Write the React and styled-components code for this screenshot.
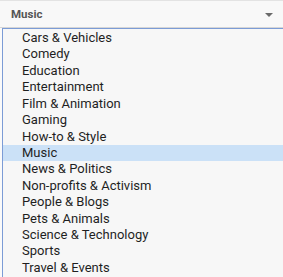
import { createGlobalStyle, styled } from "styled-components";

const categories = [
    "Cars & Vehicles",
    "Comedy",
    "Education",
    "Entertainment",
    "Film & Animation",
    "Gaming",
    "How-to & Style",
    "Music",
    "News & Politics",
    "Non-profits & Activism",
    "People & Blogs",
    "Pets & Animals",
    "Science & Technology",
    "Sports",
    "Travel & Events",
];

const selected = "Music";

function App() {
    return (
        <>
            <GlobalStyle />
            <Wrapper>
                <SelectBox>
                    <span>{selected}</span>
                    <Arrow />
                </SelectBox>
                <List>
                    {categories.map(c => (
                        <Option key={c} $active={c === selected}>{c}</Option>
                    ))}
                </List>
            </Wrapper>
        </>
    );
}

const GlobalStyle = createGlobalStyle`
    html, body {
        margin: 0;
        padding: 0;
        background: #fafafa;
    }
    body {
        font-family: Roboto, "Liberation Sans", Arial, sans-serif;
    }
`;

const Wrapper = styled.div`
    width: 283px;
    height: 277px;
    overflow: hidden;
    background: #fafafa;
`;

const SelectBox = styled.div`
    height: 26px;
    border-top: 1px solid #e3e3e3;
    border-bottom: 1px solid #d6d6d6;
    background: #f8f8f8;
    display: flex;
    align-items: center;
    justify-content: space-between;
    padding: 0 10px 0 11px;

    span{
        font-size: 11.5px;
        font-weight: 700;
        color: #555;
    }
`;

const Arrow = styled.div`
    width: 0;
    height: 0;
    border-left: 4px solid transparent;
    border-right: 4px solid transparent;
    border-top: 4px solid #6a6a6a;
    margin-top: 1px;
`;

const List = styled.ul`
    list-style: none;
    margin: 0 0 0 2px;
    padding: 1px 0 1px;
    border-top: 1px solid #7c9cd6;
    border-left: 1px solid #7c9cd6;
    border-bottom: 1px solid #7c9cd6;
    background: #f7f7f7;
`;

const Option = styled.li`
    height: 16.43px;
    line-height: 16.43px;
    padding-left: 19px;
    font-size: 13px;
    color: #1f1f1f;
    white-space: nowrap;
    background: ${p => (p.$active ? "#cbe1f7" : "transparent")};
`;

export default App;
